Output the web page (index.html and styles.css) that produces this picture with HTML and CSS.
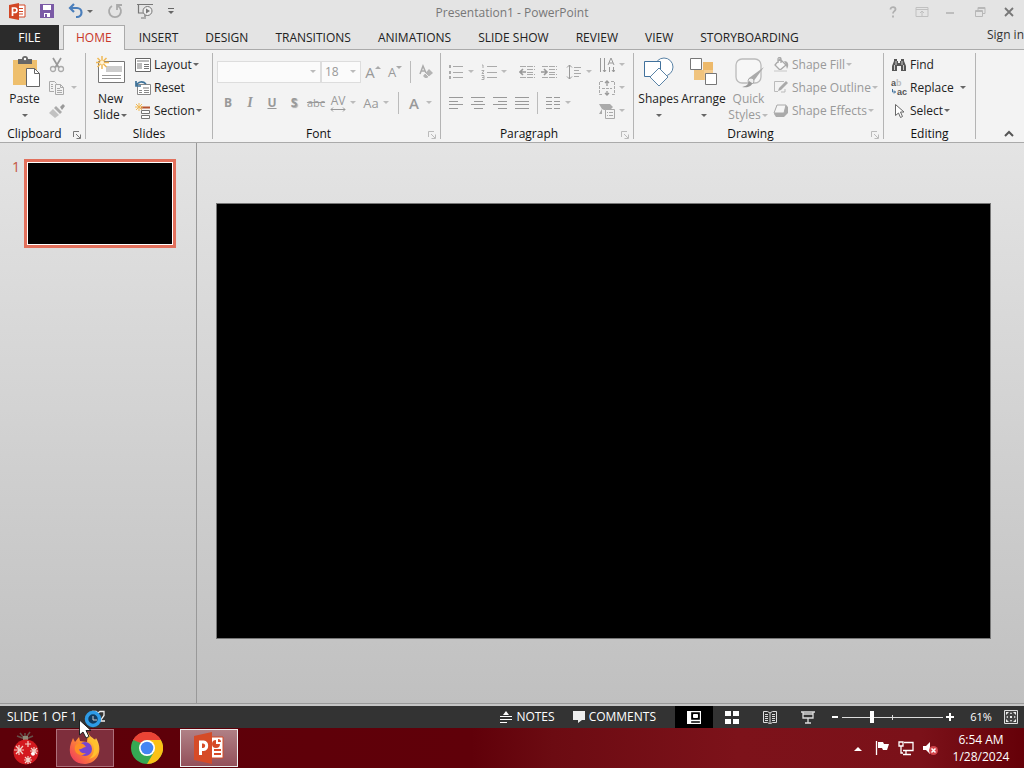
FILE: index.html
```
<!DOCTYPE html>
<html lang="en">
<head>
    <meta charset="utf-8">
    <title>Presentation1 - PowerPoint</title>
    <meta name="viewport" content="width=device-width, initial-scale=1">
    <link rel="stylesheet" href="styles.css">
</head>
<body>
    <header class="titlebar">
        <div class="quick-access">
            <svg class="app-icon" width="17" height="17" viewBox="0 0 17 17"><path d="M8 2h8v12H8z" fill="#fff" stroke="#d24726"/><path d="M10 5.500h4M10 8.500h4M10 11h4" stroke="#d24726"/><path d="M0 2l10-2v17L0 15z" fill="#d24726"/><path d="M3.500 13V5h2.200a2.200 2.200 0 0 1 0 4.500H3.500" fill="none" stroke="#fff" stroke-width="1.700"/></svg>
            <button class="qat" aria-label="Save"><svg width="16" height="16" viewBox="0 0 16 16"><path d="M1 1h14v14H1z" fill="#7b5aa6"/><path d="M4 2h8v5H4zM5 10h6v4H5z" fill="#fff"/><path d="M6 11h2v3H6z" fill="#7b5aa6"/></svg></button>
            <button class="qat undo" aria-label="Undo"><svg width="16" height="16" viewBox="0 0 16 16"><path d="M6 1L2 5l4 4M2 5h7a4.500 4.500 0 0 1 0 9H8" fill="none" stroke="#4a7ebb" stroke-width="2.200"/></svg><span class="caret"></span></button>
            <button class="qat" aria-label="Repeat"><svg width="16" height="16" viewBox="0 0 16 16"><path d="M5 3a6 6 0 1 0 6 0M10 7V2h5" fill="none" stroke="#aaa" stroke-width="1.800"/></svg></button>
            <button class="qat" aria-label="Start from beginning"><svg width="18" height="16" viewBox="0 0 18 16"><path d="M1 1.500h16M2.500 2v8h5M9 11v3M5 15h5" fill="none" stroke="#777" stroke-width="1.200"/><circle cx="11.500" cy="8" r="4.500" fill="#eee" stroke="#777"/><path d="M10 5.500l4 2.500-4 2.500z" fill="#777"/></svg></button>
            <button class="qat" aria-label="Customize"><svg width="8" height="8" viewBox="0 0 8 8"><path d="M1 1.500h6" stroke="#666"/><path d="M1 4h6L4 7z" fill="#666"/></svg></button>
        </div>
        <div class="window-title">Presentation1 - PowerPoint</div>
        <div class="window-buttons">
            <button aria-label="Help"><svg width="14" height="14" viewBox="0 0 14 14"><path d="M4.500 4.500c0-3.500 5.500-3 5 0-.3 1.700-2.500 1.800-2.500 4M7 10.500v2" fill="none" stroke="#b0b0b0" stroke-width="1.800"/></svg></button>
            <button aria-label="Ribbon display options"><svg width="14" height="14" viewBox="0 0 14 14"><path d="M1 2.500h12v9H1zM1 4.500h12M7 11V6M5 8l2-2 2 2" fill="none" stroke="#c0c0c0"/></svg></button>
            <button aria-label="Minimize"><svg width="14" height="14" viewBox="0 0 14 14"><path d="M2 8h8" stroke="#b0b0b0" stroke-width="1.500"/></svg></button>
            <button aria-label="Restore"><svg width="14" height="14" viewBox="0 0 14 14"><path d="M2.500 5.500h7v6h-7zM5 5V2.500h7v6h-2M2.500 6.500h7M5 3.500h7" fill="none" stroke="#b8b8b8"/></svg></button>
            <button aria-label="Close"><svg width="14" height="14" viewBox="0 0 14 14"><path d="M3 3l8 8M11 3l-8 8" stroke="#777" stroke-width="1.800"/></svg></button>
        </div>
    </header>

    <nav class="tabs">
        <button class="file-tab">FILE</button>
        <button class="tab active">HOME</button>
        <button class="tab">INSERT</button>
        <button class="tab">DESIGN</button>
        <button class="tab">TRANSITIONS</button>
        <button class="tab">ANIMATIONS</button>
        <button class="tab">SLIDE SHOW</button>
        <button class="tab">REVIEW</button>
        <button class="tab">VIEW</button>
        <button class="tab">STORYBOARDING</button>
        <a class="sign-in" href="#">Sign in</a>
    </nav>

    <div class="ribbon">
        <section class="group clipboard">
            <div class="tools">
                <button class="big"><svg width="30" height="32" viewBox="0 0 30 32"><path d="M3 4h24v25H3z" fill="#eebf6d"/><path d="M8 3h4a3 3 0 0 1 6 0h4v5H8z" fill="#666"/><circle cx="15" cy="3" r="1.200" fill="#fff"/><path d="M16.500 12.500h8l5 5v13h-13z" fill="#fff" stroke="#666"/><path d="M24.500 12.500v5h5" fill="none" stroke="#666"/></svg><span>Paste</span><span class="caret"></span></button>
                <div class="stack">
                    <button class="small off" aria-label="Cut"><svg width="16" height="16" viewBox="0 0 16 16"><path d="M4 1l6 10M12 1L6 11" stroke="#999" stroke-width="1.700"/><circle cx="4" cy="12" r="2.500" fill="none" stroke="#aaa" stroke-width="1.300"/><circle cx="12" cy="12" r="2.500" fill="none" stroke="#aaa" stroke-width="1.300"/></svg></button>
                    <button class="small off copy" aria-label="Copy"><svg width="16" height="16" viewBox="0 0 16 16"><path d="M5 11.500H.5v-10h5l2 2M2 4.500h2M2 6.500h2M2 8.500h2" fill="none" stroke="#aaa"/><path d="M6.500 4.500h5l3 3v7h-8zM11.500 4.500v3h3M8 8.500h3M8 10.500h5M8 12.500h5" fill="#f3f3f3" stroke="#aaa"/></svg><span class="caret"></span></button>
                    <button class="small off" aria-label="Format Painter"><svg width="16" height="16" viewBox="0 0 16 16"><path d="M11 4l3-3 2 2-3 4z" fill="#999"/><path d="M7 3l6 6-2 2-6-6z" fill="#aaa"/><path d="M4 6l6 6-4 3-6-5z" fill="#c2c2c2"/></svg></button>
                </div>
            </div>
            <div class="group-label">Clipboard<button class="launcher" aria-label="Clipboard options"><svg width="8" height="8" viewBox="0 0 8 8"><path d="M.5 6V.5H6M3 3l4 4M7.500 3.500v4h-4" fill="none" stroke="#777"/></svg></button></div>
        </section>

        <section class="group slides">
            <div class="tools">
                <button class="big"><svg width="30" height="32" viewBox="0 0 30 32"><path d="M2.500 5.500h26v21h-26z" fill="#fff" stroke="#777"/><path d="M10 10h16v6H10z" fill="#ccc"/><path d="M6 19.500h19M6 22.500h19" stroke="#999"/><path d="M6 0v13M0 6.500h13M1.500 2l9 9M10.500 2l-9 9" stroke="#f0b955" stroke-width="1.500"/><circle cx="6" cy="6.500" r="2" fill="#fff3d8"/></svg><span>New</span><span class="line">Slide<span class="caret"></span></span></button>
                <div class="stack">
                    <button class="small"><svg width="16" height="16" viewBox="0 0 16 16"><path d="M.5 1.500h15v13H.5z" fill="#fff" stroke="#666"/><path d="M2 3h12v2H2zM2 6h5v6H2z" fill="#bbb"/><path d="M9 7.500h5M9 9.500h5M9 11.500h5" stroke="#777"/></svg>Layout<span class="caret"></span></button>
                    <button class="small"><svg width="16" height="16" viewBox="0 0 16 16"><path d="M2.500 4.500h13v10h-13z" fill="#fff" stroke="#888"/><path d="M8 7h6v2H8z" fill="#bbb"/><path d="M4 10.500h3M4 12.500h3M9 10.500h5M9 12.500h5" stroke="#888"/><path d="M1 1v5h5M1 6c2-5 7-5 10-2" fill="none" stroke="#3d7299" stroke-width="1.700"/></svg>Reset</button>
                    <button class="small"><svg width="16" height="16" viewBox="0 0 16 16"><path d="M6 4.500h9" stroke="#b6532f" stroke-width="2"/><path d="M6.500 7.500h8v3h-8zM6.500 12.500h8v3h-8z" fill="#fff" stroke="#777"/><path d="M4 0v8M0 4h8M1 1l6 6M7 1L1 7" stroke="#f0b955"/></svg>Section<span class="caret"></span></button>
                </div>
            </div>
            <div class="group-label">Slides</div>
        </section>

        <section class="group font">
            <div class="tools rows">
                <div class="row">
                    <label class="combo name"><select aria-label="Font" disabled><option></option></select><span class="caret"></span></label>
                    <label class="combo size"><select aria-label="Font size" disabled><option>18</option></select><span class="caret"></span></label>
                    <button class="tool off large-a" aria-label="Increase font size">A<svg width="6" height="14" viewBox="0 0 6 14"><path d="M0 4h6L3 1z" fill="#aaa"/></svg></button>
                    <button class="tool off small-a" aria-label="Decrease font size">A<svg width="6" height="14" viewBox="0 0 6 14"><path d="M0 1h6L3 4z" fill="#aaa"/></svg></button>
                    <span class="rule"></span>
                    <button class="tool off" aria-label="Clear formatting"><svg width="16" height="16" viewBox="0 0 16 16"><path d="M2 10l3-8 3 7M3 7h4" fill="none" stroke="#aaa" stroke-width="1.500"/><path d="M5 12l6-7 4 4-6 5H7z" fill="#b4b4b4"/><path d="M7 9l4 4" stroke="#eee"/></svg></button>
                </div>
                <div class="row">
                    <button class="tool off bold">B</button>
                    <button class="tool off italic">I</button>
                    <button class="tool off underline">U</button>
                    <button class="tool off shadow">S</button>
                    <button class="tool off strike">abc</button>
                    <button class="tool off spacing">AV<svg width="16" height="5" viewBox="0 0 16 5"><path d="M1 2.500h14M3 .5l-2 2 2 2M13 .5l2 2-2 2" fill="none" stroke="#999"/></svg></button>
                    <span class="caret off"></span>
                    <button class="tool off case">Aa</button>
                    <span class="caret off"></span>
                    <span class="rule wide"></span>
                    <button class="tool off color">A</button>
                    <span class="caret off"></span>
                </div>
            </div>
            <div class="group-label">Font<button class="launcher off" aria-label="Font options"><svg width="8" height="8" viewBox="0 0 8 8"><path d="M.5 6V.5H6M3 3l4 4M7.500 3.500v4h-4" fill="none" stroke="#bbb"/></svg></button></div>
        </section>

        <section class="group paragraph">
            <div class="tools">
                <div class="rows">
                    <div class="row">
                        <button class="tool off" aria-label="Bullets"><svg width="16" height="16" viewBox="0 0 16 16"><path d="M5 2.500h10M5 8.500h10M5 13.500h10" stroke="#aaa"/><path d="M1 1h2v3H1zM1 7h2v3H1zM1 12h2v3H1z" fill="#aaa"/></svg></button>
                        <span class="caret off"></span>
                        <button class="tool off" aria-label="Numbering"><svg width="16" height="16" viewBox="0 0 16 16"><path d="M6 2.500h10M6 8.500h10M6 13.500h10M1 1h1v3M.500 6.500H3L1 9.500h2M.5 11.500H3v4H.5M1 13.500h2" fill="none" stroke="#aaa"/></svg></button>
                        <span class="caret off"></span>
                        <button class="tool off indent" aria-label="Decrease indent"><svg width="16" height="14" viewBox="0 0 16 14"><path d="M1 1.500h15M8 4.500h8M8 7.500h6M8 9.500h8M1 12.500h15" stroke="#aaa" stroke-dasharray="6 1"/><path d="M7 7H1M4 4L1 7l3 3" fill="none" stroke="#999" stroke-width="1.600"/></svg></button>
                        <button class="tool off" aria-label="Increase indent"><svg width="16" height="14" viewBox="0 0 16 14"><path d="M1 1.500h15M8 4.500h8M8 7.500h6M8 9.500h8M1 12.500h15" stroke="#aaa" stroke-dasharray="6 1"/><path d="M0 7h6M3 4l3 3-3 3" fill="none" stroke="#999" stroke-width="1.600"/></svg></button>
                        <button class="tool off line-space" aria-label="Line spacing"><svg width="16" height="16" viewBox="0 0 16 16"><path d="M3.500 1v14M1 3.500L3.500 1 6 3.500M1 12.500L3.500 15 6 12.500" fill="none" stroke="#999"/><path d="M8 3.500h7M8 6.500h5M8 9.500h7M8 12.500h5" stroke="#aaa"/></svg></button>
                        <span class="caret off"></span>
                    </div>
                    <div class="row">
                        <button class="tool off" aria-label="Align left"><svg width="16" height="12" viewBox="0 0 16 12"><path d="M1 .5h14M1 4.500h9M1 7.500h14M1 11.500h9" stroke="#999"/></svg></button>
                        <button class="tool off" aria-label="Center"><svg width="16" height="12" viewBox="0 0 16 12"><path d="M1 .5h14M4 4.500h9M1 7.500h14M4 11.500h9" stroke="#999"/></svg></button>
                        <button class="tool off" aria-label="Align right"><svg width="16" height="12" viewBox="0 0 16 12"><path d="M1 .5h14M6 4.500h9M1 7.500h14M6 11.500h9" stroke="#999"/></svg></button>
                        <button class="tool off" aria-label="Justify"><svg width="16" height="12" viewBox="0 0 16 12"><path d="M1 .5h14M1 4.500h14M1 7.500h14M1 11.500h14" stroke="#999"/></svg></button>
                        <span class="rule"></span>
                        <button class="tool off" aria-label="Columns"><svg width="16" height="12" viewBox="0 0 16 12"><path d="M1 .5h6M9 .5h6M1 4.500h6M9 4.500h6M1 7.500h6M9 7.500h6M1 11.500h6M9 11.500h6" stroke="#999"/></svg></button>
                        <span class="caret off"></span>
                    </div>
                </div>
                <div class="stack">
                    <button class="small off" aria-label="Text direction"><svg width="16" height="16" viewBox="0 0 16 16"><path d="M1.500 1v14M5.500 1v14M10.500 10v5M14.500 10v5M4 13l1.500 2L7 13M13 13l1.500 2 1.500-2M9 8l3-7 3 7M10 6h4" fill="none" stroke="#999"/></svg><span class="caret"></span></button>
                    <button class="small off" aria-label="Align text"><svg width="16" height="16" viewBox="0 0 16 16"><path d="M4 1.500H.5v13H4M12 1.500h3.500v13H12M3 8.500h10" fill="none" stroke="#aaa" stroke-dasharray="3 1"/><path d="M8 6V1M6 3l2-2 2 2M8 11v4M6 13l2 2 2-2" fill="none" stroke="#999" stroke-width="1.300"/></svg><span class="caret"></span></button>
                    <button class="small off" aria-label="Convert to SmartArt"><svg width="16" height="16" viewBox="0 0 16 16"><path d="M0 1h11l3 3-3 3H5L3 6v5H0l3-5z" fill="#aaa"/><path d="M6.500 6.500h9v9h-9z" fill="#f3f3f3" stroke="#aaa"/><path d="M8 9.500h1M10 9.500h4M8 12.500h1M10 12.500h4" stroke="#aaa"/></svg><span class="caret"></span></button>
                </div>
            </div>
            <div class="group-label">Paragraph<button class="launcher off" aria-label="Paragraph options"><svg width="8" height="8" viewBox="0 0 8 8"><path d="M.5 6V.5H6M3 3l4 4M7.500 3.500v4h-4" fill="none" stroke="#bbb"/></svg></button></div>
        </section>

        <section class="group drawing">
            <div class="tools">
                <button class="big"><svg width="30" height="32" viewBox="0 0 30 32"><circle cx="20" cy="11" r="9" fill="#fff" stroke="#5a83a6"/><path d="M.5 5.500h16v15H.5z" fill="#fff" stroke="#41719c"/><path d="M15 12l9 9-9 9-9-9z" fill="#fff" stroke="#5a83a6"/></svg><span>Shapes</span><span class="caret"></span></button>
                <button class="big"><svg width="30" height="32" viewBox="0 0 30 32"><path d="M14 6h10v9H14z" fill="#edb96a"/><path d="M5 14h10v10H5z" fill="#f0c37d"/><path d="M15 14h9v10h-9z" fill="#f6cd90"/><path d="M1.500 2.500h11v11h-11zM16.500 17.500h11v11h-11z" fill="#fff" stroke="#777"/></svg><span>Arrange</span><span class="caret"></span></button>
                <button class="big off"><svg width="30" height="32" viewBox="0 0 30 32"><rect x="2" y="3" width="25" height="24" rx="6" fill="#f7f7f7" stroke="#bbb" stroke-width="1.300"/><path d="M30 11L19 26l-4-4z" fill="#aaa"/><circle cx="17" cy="25" r="3" fill="#eee" stroke="#aaa"/><path d="M15 25c-1 5-4 5-7 6 6 1 10-1 10-4z" fill="#999"/></svg><span>Quick</span><span class="line">Styles<span class="caret"></span></span></button>
                <div class="stack">
                    <button class="small off"><svg width="16" height="16" viewBox="0 0 16 16"><path d="M7 2l6 6-6 5-5-5zM5 6V2c0-2 3-2 3 0v4" fill="#f8f8f8" stroke="#aaa" stroke-width="1.300"/><path d="M11 4c5 0 5 5 3 8-1-3-1-5-3-8z" fill="#aaa"/><path d="M1 14h13" stroke="#ddd" stroke-width="2"/></svg>Shape Fill<span class="caret"></span></button>
                    <button class="small off"><svg width="16" height="16" viewBox="0 0 16 16"><path d="M11 1.500H1.500v10H5M12 9v3H8" fill="none" stroke="#bbb"/><path d="M13 1l2 2-7 7-3 1 1-3z" fill="#aaa"/></svg>Shape Outline<span class="caret"></span></button>
                    <button class="small off"><svg width="16" height="16" viewBox="0 0 16 16"><path d="M4 2h9l2 2v6l-4 4H3l-2-3z" fill="#aaa"/><path d="M4 2h9l-2 8H1z" fill="#f5f5f5" stroke="#aaa"/></svg>Shape Effects<span class="caret"></span></button>
                </div>
            </div>
            <div class="group-label">Drawing<button class="launcher off" aria-label="Drawing options"><svg width="8" height="8" viewBox="0 0 8 8"><path d="M.5 6V.5H6M3 3l4 4M7.500 3.500v4h-4" fill="none" stroke="#bbb"/></svg></button></div>
        </section>

        <section class="group editing">
            <div class="tools">
                <div class="stack">
                    <button class="small"><svg width="16" height="16" viewBox="0 0 16 16"><path d="M3 2h3v2h1v2h2V4h1V2h3v2l2 5v5h-5V9H6v5H1V9l2-5z" fill="#555"/><path d="M3.500 8v5M12.500 8v5M5 4v4M11 4v4" stroke="#ccc"/></svg>Find</button>
                    <button class="small replace"><svg class="ab" width="16" height="18" viewBox="0 0 16 18"><text x="0" y="7">a<tspan class="dim">b</tspan></text><text x="6" y="16">ac</text><path d="M1.500 10v3h3M3 11.500L4.500 13 3 14.500" fill="none" stroke="#41719c"/></svg>Replace<span class="caret"></span></button>
                    <button class="small"><svg width="16" height="16" viewBox="0 0 16 16"><path d="M4.500 1.500v11l3-2.500 2 4.500 2-1-2-4.500h3.500z" fill="#fff" stroke="#666"/></svg>Select<span class="caret"></span></button>
                </div>
            </div>
            <div class="group-label">Editing</div>
        </section>
        <button class="collapse" aria-label="Collapse the ribbon"><svg width="10" height="7" viewBox="0 0 10 7"><path d="M1 6l4-4 4 4" fill="none" stroke="#555" stroke-width="2"/></svg></button>
    </div>

    <main class="workspace">
        <aside class="thumbnails">
            <span class="slide-number">1</span>
            <div class="thumbnail"></div>
        </aside>
        <section class="editor">
            <div class="slide"></div>
        </section>
    </main>

    <footer class="statusbar">
        <span class="slide-count">SLIDE 1 OF 1</span>
        <button class="spelling" aria-label="Spelling"><svg width="16" height="14" viewBox="0 0 16 14"><path d="M7 12H1.500V1.500H5l2 1.500M7 3l2-1.500h4v4L9 11h5M7 3v4" fill="none" stroke="#eee" stroke-width="1.300"/></svg></button>
        <button class="notes"><svg width="12" height="12" viewBox="0 0 12 12"><path d="M3 4l3-4 3 4z" fill="#fff"/><path d="M0 5.500h12M0 8.500h12M0 11.500h7" stroke="#fff"/></svg>NOTES</button>
        <button class="comments"><svg width="12" height="12" viewBox="0 0 12 12"><path d="M0 0h12v9H9l-4 3V9H0z" fill="#eee"/></svg>COMMENTS</button>
        <div class="views">
            <button class="view active" aria-label="Normal"><svg width="14" height="13" viewBox="0 0 14 13"><path d="M.5.5h13v12H.5zM3.500.5v12M3.500 9.500h10" fill="none" stroke="#fff" stroke-width="1.300"/><path d="M1 1h2v11H1z" fill="#fff"/><path d="M6.500 3.500h4v3h-4z" fill="#fff" stroke="#fff"/></svg></button>
            <button class="view" aria-label="Slide sorter"><svg width="14" height="13" viewBox="0 0 14 13"><path d="M0 0h6v5H0zM8 0h6v5H8zM0 8h6v5H0zM8 8h6v5H8z" fill="#fff"/></svg></button>
            <button class="view" aria-label="Reading view"><svg width="14" height="13" viewBox="0 0 14 13"><path d="M.5.5h4L7 2l2.500-1.500h4v11h-4L7 13l-2.500-1.500h-4zM7 2v10M2 3.500h3M2 5.500h3M2 7.500h3M2 9.500h3M9 3.500h3M9 5.500h3M9 7.500h3M9 9.500h3" fill="none" stroke="#ddd"/></svg></button>
            <button class="view" aria-label="Slide show"><svg width="14" height="13" viewBox="0 0 14 13"><path d="M0 1h14M2 1v6h10V1M2 3h10M7 7v5M4 12h6" fill="none" stroke="#ddd" stroke-width="1.300"/></svg></button>
        </div>
        <div class="zoom">
            <button aria-label="Zoom out"><svg width="8" height="8" viewBox="0 0 8 8"><path d="M1 4h6" stroke="#fff" stroke-width="2"/></svg></button>
            <input type="range" aria-label="Zoom" min="0" max="100" value="29">
            <button aria-label="Zoom in"><svg width="8" height="8" viewBox="0 0 8 8"><path d="M0 4h8M4 0v8" stroke="#fff" stroke-width="2"/></svg></button>
        </div>
        <button class="percent">61%</button>
        <button class="fit" aria-label="Fit slide to window"><svg width="14" height="14" viewBox="0 0 14 14"><path d="M.5.5h13v13H.5z" fill="#444" stroke="#ddd"/><path d="M2 5V2h3zM9 2h3v3zM2 9v3h3zM12 9v3H9zM6 6h2v2H6zM7 2l1 2H6zM7 12l-1-2h2zM2 7l2-1v2zM12 7l-2 1V6z" fill="#eee"/></svg></button>
        <svg class="pointer" width="28" height="32" viewBox="0 0 28 32"><circle cx="14" cy="12" r="6.500" fill="#123a5e" stroke="#2e9be6" stroke-width="3.500"/><path d="M14 9v4h4" fill="none" stroke="#ccc"/><path d="M.5 13v15l3.500-3 3 6 3-1.500-3-6h5z" fill="#fff" stroke="#222"/></svg>
    </footer>

    <div class="taskbar">
        <button class="start" aria-label="Start"><svg width="28" height="34" viewBox="0 0 28 34"><path d="M13 8L8 2M13 8l5-7M13 8L5 5M14 8l7-3M13 2v6" stroke="#66504a" stroke-width="1.500"/><path d="M11 5h5v4h-5z" fill="#8d8a78"/><circle cx="14" cy="21" r="12.500" fill="#d3191f"/><path d="M7 14v10M2 19h10M4 15l7 8M11 15l-7 8M16 25v8M12 29h8M13 26l6 6M19 26l-6 6M16 10v6M13 13h6M22 16v8M18 20h8M19 17l6 6M25 17l-6 6" stroke="#f3cfc5" stroke-width="1.200"/><circle cx="21" cy="23" r="1.800" fill="#fff"/></svg></button>
        <button class="task open" aria-label="Firefox"><svg width="32" height="32" viewBox="0 0 32 32"><defs><linearGradient id="fox" x1="1" y1="0" x2="0" y2="1"><stop offset="0" stop-color="#ffe64a"/><stop offset=".45" stop-color="#ff9430"/><stop offset="1" stop-color="#ef2a63"/></linearGradient></defs><path d="M19 0c1 4 4 5 7 8l1-2c7 11 3 25-11 26C4 32-2 22 2 11l2-5 2 4 4-5 1 4 7 1z" fill="url(#fox)"/><circle cx="16" cy="17" r="7" fill="#7745d2"/><path d="M8 12c4-2 7 0 9 3-3 0-4 3-7 2 1 4 4 5 7 4-5 5-13 0-11-7z" fill="#ff8f26"/><path d="M18 8c9 3 9 14 2 19 12-3 11-15 5-20z" fill="#ffc02e"/></svg></button>
        <button class="task" aria-label="Chrome"><svg width="32" height="32" viewBox="0 0 32 32"><circle cx="16" cy="16" r="16" fill="#35a853"/><path d="M16 16L2.140 8A16 16 0 0 1 29.860 8z" fill="#ea4335"/><path d="M16 8h13.860A16 16 0 0 1 16 32l7-12z" fill="#fbc116"/><path d="M2.140 8L10 21l6-5V8z" fill="#35a853"/><path d="M2.140 8A16 16 0 0 1 29.860 8H16a8 8 0 0 0-7 5z" fill="#ea4335"/><path d="M2.140 8l7 12 3-8z" fill="#35a853"/><circle cx="16" cy="16" r="8" fill="#fff"/><circle cx="16" cy="16" r="6.300" fill="#4285f4"/></svg></button>
        <button class="task open current" aria-label="PowerPoint"><svg width="32" height="32" viewBox="0 0 32 32"><path d="M15 5h15v21H15z" fill="#fff" stroke="#d64b27"/><path d="M21 18h7M21 22h7" stroke="#d64b27" stroke-width="2"/><path d="M23 8a4 4 0 1 0 4 4h-4z" fill="#d64b27"/><path d="M25 7v3h3a3 3 0 0 0-3-3" fill="#d64b27"/><path d="M1 4l18-4v32L1 28z" fill="#d64b27"/><path d="M7.500 23V10h3a3.800 3.800 0 0 1 0 7.500h-3" fill="none" stroke="#fff" stroke-width="3"/></svg></button>
        <div class="tray">
            <button aria-label="Show hidden icons"><svg width="8" height="5" viewBox="0 0 8 5"><path d="M0 5l4-4 4 4z" fill="#fff"/></svg></button>
            <button aria-label="Action center"><svg width="16" height="16" viewBox="0 0 16 16"><path d="M2.500 1v14" stroke="#fff" stroke-width="1.300"/><path d="M4 2h5l1 2h5l-2 6H9L8 8H4z" fill="#fff"/></svg></button>
            <button aria-label="Network"><svg width="16" height="16" viewBox="0 0 16 16"><path d="M6 2.500h9v8H5M8 11v3M5 14.500h8M1 2h4v4H1zM3 6v7h2" fill="none" stroke="#fff" stroke-width="1.300"/></svg></button>
            <button aria-label="Volume muted"><svg width="16" height="16" viewBox="0 0 16 16"><path d="M1 6h3l4-4v12l-4-4H1z" fill="#fff"/><circle cx="11.500" cy="10.500" r="4.500" fill="#d4474d"/><path d="M9.500 8.500l4 4M13.500 8.500l-4 4" stroke="#fff" stroke-width="1.500"/></svg></button>
        </div>
        <div class="clock"><span>6:54 AM</span><span>1/28/2024</span></div>
    </div>
</body>
</html>
```
FILE: styles.css
```
* {
    box-sizing: border-box;
}
body {
    margin: 0;
    min-height: 100vh;
    display: flex;
    flex-direction: column;
    font-family: "Open Sans", "Noto Sans", sans-serif;
    font-size: 12px;
    line-height: 16px;
    color: #222;
    background: #e4e4e4;
}
button {
    display: flex;
    align-items: center;
    padding: 0;
    border: none;
    background: none;
    font: inherit;
    color: inherit;
    white-space: nowrap;
}
svg {
    display: block;
    flex: none;
}
.caret {
    flex: none;
    width: 8px;
    display: flex;
    justify-content: center;
}
.caret::after {
    content: "";
    border: 3px solid transparent;
    border-top-color: #666;
    border-bottom: none;
}
.off {
    color: #999;
}
.off .caret::after,
.caret.off::after,
.combo .caret::after {
    border-top-color: #bbb;
}

/* title bar */
.titlebar {
    height: 25px;
    display: grid;
    grid-template-columns: 1fr auto 1fr;
    align-items: center;
}
.quick-access {
    display: flex;
    align-items: center;
    gap: 13px;
    padding: 0 0 3px 9px;
}
.undo {
    gap: 2px;
}
.window-title {
    color: #777;
}
.window-buttons {
    display: flex;
    justify-content: flex-end;
    gap: 15px;
    padding: 0 8px 2px 0;
}

/* tabs */
.tabs {
    height: 25px;
    display: flex;
    gap: 1px;
    border-bottom: 1px solid #aaa;
}
.file-tab {
    width: 59px;
    height: 25px;
    justify-content: center;
    margin-right: 3px;
    background: #2b2b2b;
    color: #fff;
}
.tab {
    height: 25px;
    padding: 0 13px;
}
.tab.active {
    padding: 0 12px;
    border: 1px solid #aaa;
    border-bottom: none;
    background: #f4f4f4;
    color: #c8382a;
}
.sign-in {
    margin-left: auto;
    line-height: 20px;
    color: #333;
    text-decoration: none;
}

/* ribbon */
.ribbon {
    height: 93px;
    display: flex;
    background: #f3f3f3;
    border-bottom: 1px solid #aaa;
}
.group {
    display: flex;
    flex-direction: column;
    margin: 3px 0;
    border-right: 1px solid #b4b4b4;
}
.clipboard { width: 86px; }
.slides { width: 127px; }
.font { width: 228px; }
.paragraph { width: 193px; }
.drawing { width: 250px; }
.editing { width: 92px; }
.tools {
    height: 73px;
    display: flex;
    padding: 0 2px;
}
.editing .tools {
    padding-left: 5px;
}
.group-label {
    position: relative;
    height: 13px;
    padding-right: 16px;
    text-align: center;
    color: #111;
}
.slides .group-label,
.editing .group-label {
    padding-right: 0;
}
.launcher {
    position: absolute;
    right: 4px;
    top: 5px;
}
.big {
    width: 45px;
    height: 70px;
    flex-direction: column;
    justify-content: flex-start;
    padding-top: 3px;
}
.big > svg {
    margin-bottom: 3px;
}
.big > .caret {
    height: 16px;
    align-items: center;
}
.line {
    display: flex;
    align-items: center;
}
.stack {
    display: flex;
    flex-direction: column;
}
.small {
    height: 23px;
    padding: 0 2px;
    gap: 3px;
}
.small .caret {
    margin-left: -3px;
}
.paragraph .small .caret {
    margin-left: 0;
}
.copy .caret {
    margin-left: 2px;
}
.replace .caret {
    margin-left: 2px;
}
.ab {
    overflow: visible;
    font-family: "Liberation Sans", sans-serif;
    font-size: 9px;
    font-weight: bold;
    fill: #555;
}
.dim {
    fill: #bbb;
}
.rows {
    display: flex;
    flex-direction: column;
    padding: 3px 0 0 4px;
}
.paragraph .rows {
    width: 154px;
    padding-left: 2px;
}
.row {
    height: 31px;
    display: flex;
    align-items: center;
}
.tool {
    width: 22px;
    height: 22px;
    justify-content: center;
}
.row > .caret + .tool {
    margin-left: 3px;
}
.row > .caret + .indent {
    margin-left: 8px;
}
.line-space {
    margin-left: 3px;
}
.rule {
    width: 1px;
    height: 22px;
    margin: 0 4px;
    background: #bbb;
}
.rule.wide {
    margin: 0 4px 0 8px;
}
.combo {
    height: 22px;
    display: flex;
    align-items: center;
    border: 1px solid #ddd;
    background: #fbfbfb;
}
.combo select {
    flex: 1;
    min-width: 0;
    padding: 0 3px;
    border: none;
    appearance: none;
    background: none;
    font: inherit;
    color: #999;
    opacity: 1;
}
.combo.name { width: 104px; }
.combo.size {
    width: 40px;
    margin-right: 1px;
}
.combo .caret {
    margin-right: 3px;
}
.large-a { font-size: 15px; }
.small-a { font-size: 13px; }
.bold,
.underline,
.shadow {
    font-weight: bold;
}
.italic { font-style: italic; font-family: "Liberation Serif", serif; font-size: 14px; font-weight: bold; }
.underline { text-decoration: underline; }
.shadow { text-shadow: 1px 1px 1px #aaa; }
.strike { font-size: 11px; text-decoration: line-through; }
.spacing {
    flex-direction: column;
    line-height: 13px;
}
.case { font-size: 13px; }
.color {
    font-size: 15px;
    font-weight: 600;
}
.collapse {
    align-self: flex-end;
    margin: 0 10px 5px auto;
}

/* slides */
.workspace {
    flex: 1;
    display: flex;
    margin-bottom: 2px;
    border-bottom: 1px solid #999;
    background: linear-gradient(#e4e4e4, #c0c0c0);
}
.thumbnails {
    width: 197px;
    display: flex;
    align-items: flex-start;
    gap: 4px;
    padding: 16px 20px 0 12px;
    border-right: 1px solid #999;
}
.slide-number {
    width: 8px;
    font-size: 14px;
    color: #c4553f;
}
.thumbnail {
    flex: 1;
    height: 89px;
    border: 3px solid #e2705c;
    outline: 1px solid #fff;
    outline-offset: -4px;
    background: #000;
}
.editor {
    flex: 1;
    padding: 60px 33px 60px 19px;
}
.slide {
    aspect-ratio: 16 / 9;
    border: 1px solid #777;
    background: #000;
}

/* status bar */
.statusbar {
    position: relative;
    height: 22px;
    display: flex;
    align-items: center;
    padding: 0 6px 0 7px;
    background: #333;
    color: #fff;
    box-shadow: 0 -2px #c6c6c6;
}
.slide-count {
    margin-right: 14px;
}
.notes,
.comments {
    gap: 4px;
}
.notes {
    margin-left: auto;
}
.comments {
    margin: 0 19px 0 18px;
}
.views {
    display: flex;
    height: 22px;
}
.view {
    width: 38px;
    justify-content: center;
}
.view.active {
    background: #000;
}
.zoom {
    display: flex;
    align-items: center;
    gap: 3px;
    margin-left: 4px;
}
.zoom input {
    width: 101px;
    height: 14px;
    margin: 0;
    appearance: none;
    background: linear-gradient(#ddd, #ddd) center / 100% 1px no-repeat, linear-gradient(#ddd, #ddd) center / 1px 5px no-repeat;
}
.zoom input::-webkit-slider-thumb {
    appearance: none;
    width: 4px;
    height: 12px;
    background: #fff;
}
.percent {
    width: 50px;
    padding-left: 4px;
    justify-content: center;
    font-size: 11px;
}
.pointer {
    position: absolute;
    left: 79px;
    top: 1px;
    z-index: 1;
}

/* taskbar */
.taskbar {
    height: 40px;
    display: flex;
    align-items: center;
    padding: 0 5px 0 10px;
    background: linear-gradient(90deg, #5d0009 0%, #600009 46%, #6c0b12 54%, #7d121a 72%, #7b1119 90%, #650008 100%);
    color: #fff;
}
.start {
    width: 46px;
    padding-left: 2px;
}
.task {
    width: 58px;
    height: 38px;
    margin-right: 4px;
    justify-content: center;
}
.open {
    border: 1px solid #ad707b;
    background: #7e2e3c;
}
.current {
    border-color: #eee;
    background: linear-gradient(#b08085, #93505a);
}
.tray {
    display: flex;
    align-items: center;
    gap: 8px;
    margin-left: auto;
}
.tray button:first-child {
    margin-right: 4px;
}
.clock {
    width: 76px;
    margin-left: 5px;
    display: flex;
    flex-direction: column;
    align-items: center;
    line-height: 17px;
}
```
